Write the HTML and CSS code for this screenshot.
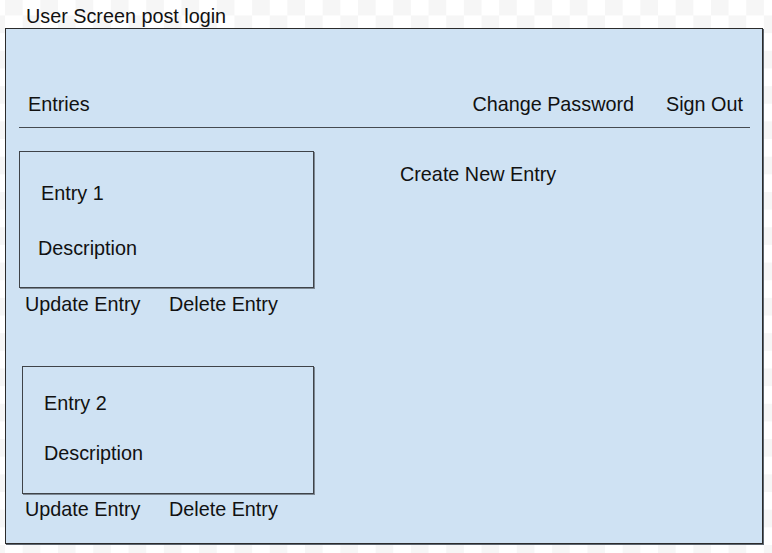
FILE: index.html
```html
<!DOCTYPE html>
<html>
<head>
<meta charset="utf-8">
<title>User Screen post login</title>
<link rel="stylesheet" href="styles.css">
</head>
<body>
  <div class="caption">User Screen post login</div>
  <div class="screen">
    <div class="topbar">
      <div class="brand">Entries</div>
      <div class="nav">
        <span class="nav-link">Change Password</span>
        <span class="nav-link">Sign Out</span>
      </div>
    </div>
    <div class="divider"></div>
    <div class="content">
      <div class="entries">
        <div class="entry entry-one">
          <div class="entry-title">Entry 1</div>
          <div class="entry-desc">Description</div>
        </div>
        <div class="actions actions-one">
          <span class="action">Update Entry</span>
          <span class="action">Delete Entry</span>
        </div>
        <div class="entry entry-two">
          <div class="entry-title">Entry 2</div>
          <div class="entry-desc">Description</div>
        </div>
        <div class="actions actions-two">
          <span class="action">Update Entry</span>
          <span class="action">Delete Entry</span>
        </div>
      </div>
      <div class="side">
        <div class="create">Create New Entry</div>
      </div>
    </div>
  </div>
</body>
</html>
```

FILE: styles.css
```css
html, body {
  margin: 0;
  padding: 0;
}

body {
  width: 772px;
  height: 553px;
  overflow: hidden;
  font-family: "Liberation Sans", Arial, sans-serif;
  font-size: 19.8px;
  line-height: 23px;
  color: #111;
  background-color: #fff;
  background-image: repeating-conic-gradient(#fff 0 25%, #f6f6f6 0 50%);
  background-size: 35.3px 35.3px;
  background-position: 5px 33.15px;
}

.caption {
  padding: 5px 0 0 26px;
  height: 22px;
  white-space: nowrap;
}

.screen {
  box-sizing: border-box;
  margin: 1px 0 0 5px;
  width: 758px;
  height: 516px;
  background: #cfe2f3;
  border: 1px solid #2b2b2b;
  box-shadow: 1px 1px 0 #5d6670;
}

.topbar {
  display: flex;
  justify-content: space-between;
  padding: 64px 19px 0 22px;
}

.nav {
  display: flex;
  gap: 32px;
}

.nav-link,
.action,
.brand,
.create,
.entry-title,
.entry-desc {
  white-space: nowrap;
}

.divider {
  margin: 11px 0 0 13px;
  width: 731px;
  height: 1px;
  background: #454a50;
}

.content {
  display: flex;
  padding-left: 13px;
}

.entries {
  display: flex;
  flex-direction: column;
  width: 295px;
}

.entry {
  box-sizing: border-box;
  border: 1px solid #3f4348;
  box-shadow: 1px 1px 0 #7d8893;
}

.entry-one {
  margin-top: 23px;
  width: 295px;
  height: 137px;
  padding: 30px 0 0 21px;
}

.entry-one .entry-desc {
  margin: 32px 0 0 -3px;
}

.entry-two {
  margin: 50px 0 0 3px;
  width: 292px;
  height: 128px;
  padding: 25px 0 0 21px;
}

.entry-two .entry-desc {
  margin-top: 27px;
}

.actions {
  display: flex;
  gap: 28.5px;
  padding-left: 6px;
}

.actions-one {
  margin-top: 5px;
}

.actions-two {
  margin-top: 4px;
}

.side {
  margin-left: 86px;
  padding-top: 35px;
}
```
